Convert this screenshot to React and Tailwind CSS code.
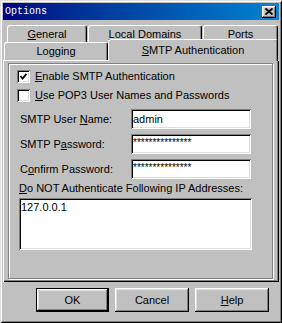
import React from 'react';

const raised = 'shadow-[inset_-1px_-1px_#000,inset_1px_1px_#fff,inset_-2px_-2px_#808080,inset_2px_2px_#dfdfdf]';
const sunken = 'shadow-[inset_1px_1px_#808080,inset_-1px_-1px_#fff,inset_2px_2px_#000,inset_-2px_-2px_#dfdfdf]';
const tab = 'flex items-center justify-center bg-[#c0c0c0] rounded-t-[3px] border-l border-t border-r border-l-white border-t-white border-r-black shadow-[inset_-1px_0_#808080]';

const U = ({ children }) => <span className="underline underline-offset-[1px]">{children}</span>;

const Check = ({ checked }) => (
  <div className={`w-[13px] h-[13px] bg-white flex items-center justify-center ${sunken}`}>
    {checked && (
      <svg width="9" height="9" viewBox="0 0 9 9">
        <path d="M1.5 4 L3.5 6.5 L7.5 1.8" fill="none" stroke="#000" strokeWidth="1.8" />
      </svg>
    )}
  </div>
);

const Field = ({ label, value, small }) => (
  <div className="flex items-center h-[20px] ml-[3px]">
    <div className="w-[111px]">{label}</div>
    <div className={`w-[120px] h-[20px] bg-white pl-[2px] flex ${small ? 'items-start pt-[4px] text-[10px] leading-[10px]' : 'items-center'} ${sunken}`}>
      {value}
    </div>
  </div>
);

export default function App() {
  return (
    <div className="w-[282px] h-[323px] bg-[#c0c0c0] p-[3px] flex flex-col font-['Liberation_Sans',Arial,sans-serif] text-[11px] leading-[13px] text-black shadow-[inset_1px_1px_#dfdfdf,inset_-1px_-1px_#000,inset_2px_2px_#fff,inset_-2px_-2px_#808080]">
      {/* title bar */}
      <div className="h-[17px] flex items-center justify-between bg-linear-to-r from-[#000080] to-[#1084d0] pl-[2px] pr-[3px]">
        <span className="font-['Liberation_Mono',monospace] text-[10px] text-white">Options</span>
        <div className={`w-[14px] h-[12px] bg-[#c0c0c0] flex items-center justify-center ${raised}`}>
          <svg width="8" height="7" viewBox="0 0 8 7">
            <path d="M0.5 0.5 L7.5 6.5 M7.5 0.5 L0.5 6.5" stroke="#000" strokeWidth="1.8" />
          </svg>
        </div>
      </div>

      {/* tabs */}
      <div className="mt-[5px] flex h-[17px] pl-[4px] gap-[1px]">
        <div className={`${tab} w-[80px]`}><span><U>G</U>eneral</span></div>
        <div className={`${tab} w-[114px]`}><span><U>L</U>ocal Domains</span></div>
        <div className={`${tab} w-[75px]`}><span><U>P</U>orts</span></div>
      </div>
      <div className="flex items-end h-[18px] pl-px">
        <div className={`${tab} w-[104px] h-[18px] pb-[1px]`}>Logging</div>
        <div className={`${tab} relative z-10 w-[170px] h-[22px] -mb-px pb-[1px]`}>
          <span><U>S</U>MTP Authentication</span>
        </div>
      </div>

      {/* panel */}
      <div className="h-[222px] pt-[3px] pb-[3px] pl-[5px] pr-[6px] flex shadow-[inset_1px_1px_#fff,inset_-1px_-1px_#000,inset_-2px_-2px_#808080]">
        <div className="flex-1 flex flex-col pl-[8px] pt-[6px] border border-[#808080] shadow-[inset_1px_1px_#fff,1px_1px_#fff]">
          <div className="flex items-center h-[13px]">
            <Check checked />
            <span className="ml-[5px]"><U>E</U>nable SMTP Authentication</span>
          </div>
          <div className="flex items-center h-[13px] mt-[6px]">
            <Check />
            <span className="ml-[5px]"><U>U</U>se POP3 User Names and Passwords</span>
          </div>
          <div className="mt-[7px] flex flex-col gap-[5px]">
            <Field label={<>SMTP User <U>N</U>ame:</>} value="admin" />
            <Field label={<>SMTP P<U>a</U>ssword:</>} value="***************" small />
            <Field label={<>C<U>o</U>nfirm Password:</>} value="***************" small />
          </div>
          <div className="mt-[3px] ml-[2px]"><U>D</U>o NOT Authenticate Following IP Addresses:</div>
          <div className={`mt-[3px] ml-[2px] w-[233px] h-[52px] bg-white pl-[2px] pt-[3px] ${sunken}`}>127.0.0.1</div>
        </div>
      </div>

      {/* buttons */}
      <div className="mt-[6px] flex justify-end gap-[6px] pr-[10px]">
        <div className="w-[73px] h-[24px] border border-black">
          <div className={`w-full h-full flex items-center justify-center ${raised}`}>OK</div>
        </div>
        <div className={`w-[74px] h-[24px] flex items-center justify-center ${raised}`}>Cancel</div>
        <div className={`w-[74px] h-[24px] flex items-center justify-center ${raised}`}><span><U>H</U>elp</span></div>
      </div>
    </div>
  );
}
